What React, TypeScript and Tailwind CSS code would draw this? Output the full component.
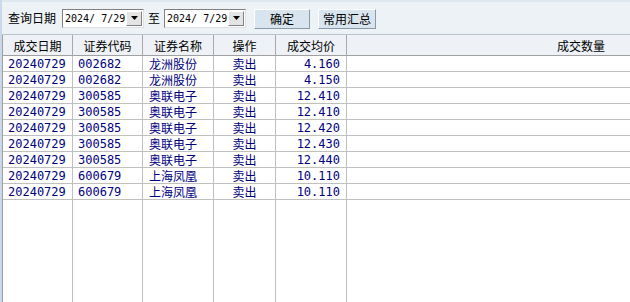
const ROWS = [
  { date: '20240729', code: '002682', name: '龙洲股份', op: '卖出', price: '4.160' },
  { date: '20240729', code: '002682', name: '龙洲股份', op: '卖出', price: '4.150' },
  { date: '20240729', code: '300585', name: '奥联电子', op: '卖出', price: '12.410' },
  { date: '20240729', code: '300585', name: '奥联电子', op: '卖出', price: '12.410' },
  { date: '20240729', code: '300585', name: '奥联电子', op: '卖出', price: '12.420' },
  { date: '20240729', code: '300585', name: '奥联电子', op: '卖出', price: '12.430' },
  { date: '20240729', code: '300585', name: '奥联电子', op: '卖出', price: '12.440' },
  { date: '20240729', code: '600679', name: '上海凤凰', op: '卖出', price: '10.110' },
  { date: '20240729', code: '600679', name: '上海凤凰', op: '卖出', price: '10.110' },
]

const COLS = 'grid grid-cols-[70px_70px_71px_62px_71px_1fr]'
const CJK = "font-['Noto_Sans_CJK_SC',sans-serif]"
const MONO = "font-['DejaVu_Sans_Mono','Noto_Sans_CJK_SC',monospace]"

function DateSelect() {
  return (
    <div className="flex h-[19px] w-[82px] items-stretch border border-t-[#808080] border-l-[#808080] border-b-[#e0e0e0] border-r-[#e0e0e0] bg-white">
      <span className={`flex-1 whitespace-nowrap pl-[2px] text-[10px] leading-[17px] text-black ${MONO}`}>2024/ 7/29</span>
      <span className="m-[1px] flex w-[16px] items-center justify-center border border-t-white border-l-white border-b-[#808080] border-r-[#808080] bg-[#e4e4e4]">
        <svg width="7" height="4" viewBox="0 0 7 4">
          <path d="M0 0h7L3.5 4z" fill="#000" />
        </svg>
      </span>
    </div>
  )
}

function Btn({ label, w }: { label: string; w: string }) {
  return (
    <button
      className={`${w} h-[20px] border border-t-white border-l-white border-b-[#8a99a8] border-r-[#8a99a8] bg-[#d9e5ee] text-[12px] leading-[18px] text-black ${CJK}`}
    >
      {label}
    </button>
  )
}

export default function App() {
  return (
    <div className="flex h-[302px] w-[630px] flex-col overflow-hidden border-l-[2px] border-l-[#c9d8ea] bg-white">
      {/* 查询条件 */}
      <div className="flex h-[35px] shrink-0 items-center border-t-[2px] border-t-[#dfe7ef] border-b border-b-[#b9c3cc] bg-[#edf2f6] pl-[6px]">
        <span className={`text-[12px] text-black ${CJK}`}>查询日期</span>
        <span className="ml-[6px]"><DateSelect /></span>
        <span className={`ml-[4px] mr-[4px] text-[12px] text-black ${CJK}`}>至</span>
        <DateSelect />
        <span className="ml-[8px]"><Btn label="确定" w="w-[56px]" /></span>
        <span className="ml-[8px]"><Btn label="常用汇总" w="w-[58px]" /></span>
      </div>

      <div className="flex flex-1 flex-col border-l border-l-[#a0a0a0]">
        {/* 表头 */}
        <div className={`${COLS} h-[21px] shrink-0 border-b border-b-[#a0a0a0] bg-[#eef2f6] text-[12px] leading-[21px] text-black ${CJK}`}>
          {['成交日期', '证券代码', '证券名称', '操作', '成交均价'].map(h => (
            <div key={h} className="border-r border-r-[#a8a8a8] text-center">{h}</div>
          ))}
          <div className="pr-[25px] text-right">成交数量</div>
        </div>

        {ROWS.map((r, i) => (
          <div key={i} className={`${COLS} h-[16px] shrink-0 border-b border-b-[#c0c0c0] text-[12px] leading-[16px] text-[#000080]`}>
            <div className={`border-r border-r-[#c0c0c0] pl-[5px] ${MONO}`}>{r.date}</div>
            <div className={`border-r border-r-[#c0c0c0] pl-[5px] ${MONO}`}>{r.code}</div>
            <div className={`border-r border-r-[#c0c0c0] pl-[6px] ${CJK}`}>{r.name}</div>
            <div className={`border-r border-r-[#c0c0c0] text-center ${CJK}`}>{r.op}</div>
            <div className={`border-r border-r-[#c0c0c0] pr-[6px] text-right ${MONO}`}>{r.price}</div>
            <div />
          </div>
        ))}

        {/* 空白区域，列线延伸到底 */}
        <div className={`${COLS} flex-1`}>
          <div className="border-r border-r-[#c0c0c0]" />
          <div className="border-r border-r-[#c0c0c0]" />
          <div className="border-r border-r-[#c0c0c0]" />
          <div className="border-r border-r-[#c0c0c0]" />
          <div className="border-r border-r-[#c0c0c0]" />
          <div />
        </div>
      </div>
    </div>
  )
}
